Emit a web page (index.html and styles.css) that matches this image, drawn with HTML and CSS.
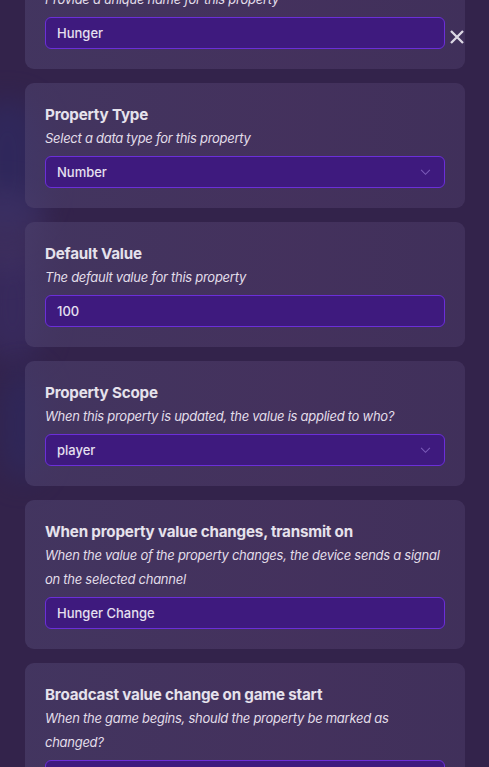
FILE: index.html
```html
<!DOCTYPE html>
<html>
<head>
<meta charset="utf-8">
<link rel="stylesheet" href="styles.css">
</head>
<body>
<div class="backdrop">
  <div class="blob b1"></div>
  <div class="blob b2"></div>
  <div class="blob b3"></div>
  <div class="blob b4"></div>
</div>
<main class="panel">
  <section class="card">
    <h2 class="title">Property Name</h2>
    <p class="desc">Provide a unique name for this property</p>
    <div class="field">Hunger</div>
  </section>
  <section class="card">
    <h2 class="title">Property Type</h2>
    <p class="desc">Select a data type for this property</p>
    <div class="field select">Number
      <svg class="chev" viewBox="0 0 12 8" width="11" height="7"><path d="M1 1 L6 6 L11 1" fill="none" stroke="#7a5bb8" stroke-width="1.2"/></svg>
    </div>
  </section>
  <section class="card">
    <h2 class="title">Default Value</h2>
    <p class="desc">The default value for this property</p>
    <div class="field">100</div>
  </section>
  <section class="card">
    <h2 class="title">Property Scope</h2>
    <p class="desc">When this property is updated, the value is applied to who?</p>
    <div class="field select">player
      <svg class="chev" viewBox="0 0 12 8" width="11" height="7"><path d="M1 1 L6 6 L11 1" fill="none" stroke="#7a5bb8" stroke-width="1.2"/></svg>
    </div>
  </section>
  <section class="card">
    <h2 class="title">When property value changes, transmit on</h2>
    <p class="desc">When the value of the property changes, the device sends a signal on the selected channel</p>
    <div class="field">Hunger Change</div>
  </section>
  <section class="card">
    <h2 class="title">Broadcast value change on game start</h2>
    <p class="desc">When the game begins, should the property be marked as changed?</p>
    <div class="field">No</div>
  </section>
</main>
<button class="close" aria-label="Close">
  <svg viewBox="0 0 16 16" width="16" height="16"><path d="M2 2 L14 14 M14 2 L2 14" stroke="#dcd8e4" stroke-width="2.3" stroke-linecap="butt"/></svg>
</button>
</body>
</html>
```

FILE: styles.css
```css
html, body {
  margin: 0;
  padding: 0;
  height: 100%;
  overflow: hidden;
}
body {
  background: #33234b;
  font-family: Inter, "Noto Sans", sans-serif;
  position: relative;
}
.backdrop {
  position: absolute;
  inset: 0;
  overflow: hidden;
  z-index: 0;
}
.blob {
  position: absolute;
  border-radius: 40%;
  filter: blur(14px);
}
.b1 { left: -30px; top: 100px; width: 75px; height: 130px; background: #2e2b66; opacity: 0.6; }
.b2 { left: -20px; top: 250px; width: 65px; height: 110px; background: #3a2d64; opacity: 0.7; }
.b3 { left: 0px; top: 370px; width: 45px; height: 110px; background: #2d2a62; opacity: 0.6; }
.b4 { left: -40px; top: 190px; width: 85px; height: 80px; background: #45376a; opacity: 0.5; }
.panel {
  position: relative;
  z-index: 1;
  display: flex;
  flex-direction: column;
  gap: 14px;
  width: 440px;
  margin: -56px 0 0 25px;
}
.card {
  background: linear-gradient(90deg, rgba(76, 64, 108, 0.62), rgba(78, 58, 104, 0.62) 60%, rgba(72, 56, 100, 0.62));
  border-radius: 9px;
  padding: 21px 20px 20px;
}
.title {
  margin: 0;
  font-size: 15.2px;
  line-height: 22px;
  font-weight: 700;
  color: #e6e2ec;
  letter-spacing: -0.2px;
}
.desc {
  margin: 0 0 6px 0;
  font-size: 13px;
  line-height: 24px;
  font-style: italic;
  color: #e2dde9;
  letter-spacing: -0.27px;
}
.field {
  box-sizing: border-box;
  height: 32px;
  border: 1px solid #6b2fd8;
  background: #3e1a7e;
  border-radius: 6px;
  padding: 0 11px;
  display: flex;
  align-items: center;
  justify-content: space-between;
  color: #e6e0f0;
  font-size: 13px;
  font-weight: 500;
}
.chev {
  margin-right: 2px;
}
.close {
  position: absolute;
  z-index: 2;
  left: 449px;
  top: 29px;
  width: 16px;
  height: 16px;
  padding: 0;
  border: 0;
  background: none;
}
.close svg { display: block; }
```
